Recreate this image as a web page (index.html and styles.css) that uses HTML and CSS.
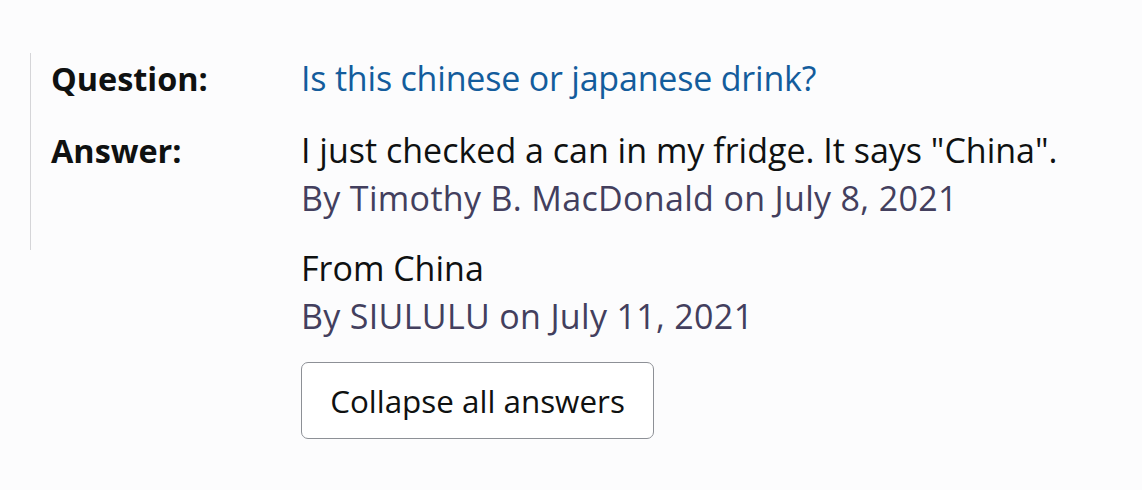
FILE: index.html
```html
<!DOCTYPE html>
<html lang="en">
<head>
<meta charset="utf-8">
<title>Question and answers</title>
<link rel="stylesheet" href="styles.css">
</head>
<body>
<div class="page">
  <div class="qa-block">
    <div class="row question-row">
      <div class="label">Question:</div>
      <div class="content"><a class="question-link" href="#">Is this chinese or japanese drink?</a></div>
    </div>
    <div class="row answer-row">
      <div class="label">Answer:</div>
      <div class="content">
        <div class="answer-text">I just checked a can in my fridge. It says "China".</div>
        <div class="byline">By Timothy B. MacDonald on July 8, 2021</div>
      </div>
    </div>
  </div>
  <div class="more-answers">
    <div class="answer">
      <div class="answer-text">From China</div>
      <div class="byline">By SIULULU on July 11, 2021</div>
    </div>
    <button class="collapse-btn" type="button">Collapse all answers</button>
  </div>
</div>
</body>
</html>
```
FILE: styles.css
```css
html, body {
  margin: 0;
  padding: 0;
  background: #fcfcfd;
}
body {
  font-family: "Open Sans", "Noto Sans", sans-serif;
  font-size: 34px;
  line-height: 48px;
  color: #0f1111;
}
.page {
  padding: 53px 0 0 30px;
}
.qa-block {
  border-left: 1px solid #d5d5d8;
  padding: 1px 0 28px 20px;
  display: flex;
  flex-direction: column;
  gap: 24px;
}
.row {
  display: flex;
}
.label {
  width: 250px;
  flex: none;
  font-weight: 700;
  font-size: 32.4px;
  color: #0f1111;
}
.content {
  display: flex;
  flex-direction: column;
}
.question-link {
  color: #135c9c;
  text-decoration: none;
  letter-spacing: -0.2px;
}
.answer-text {
  color: #0f1111;
}
.byline {
  color: #433f5e;
  letter-spacing: 0.33px;
}
.more-answers {
  padding-left: 271px;
  margin-top: -6px;
  display: flex;
  flex-direction: column;
  align-items: flex-start;
}
.answer {
  display: flex;
  flex-direction: column;
}
.collapse-btn {
  margin-top: 22px;
  font-family: inherit;
  font-size: 31.4px;
  line-height: 48px;
  color: #0f1111;
  background: #ffffff;
  border: 1px solid #8d9096;
  border-radius: 7px;
  box-sizing: border-box;
  width: 353px;
  height: 77px;
  padding: 0;
  display: flex;
  align-items: center;
  justify-content: center;
}
```
